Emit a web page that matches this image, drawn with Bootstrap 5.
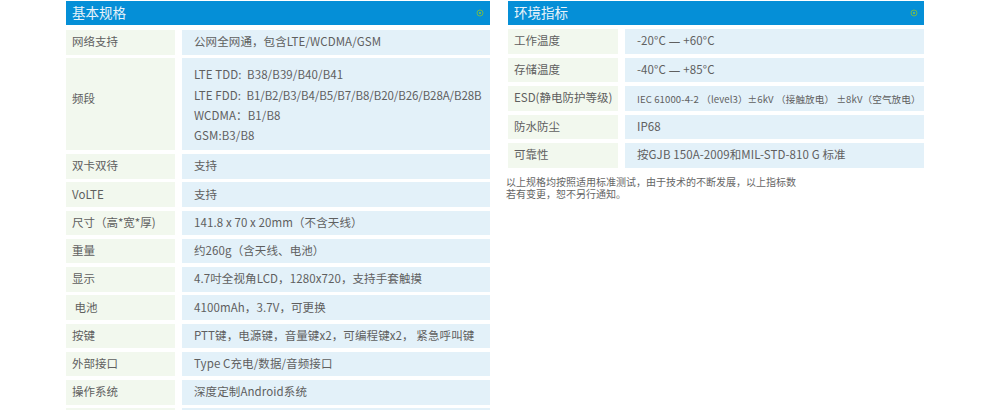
<!DOCTYPE html>
<html lang="zh"><head><meta charset="utf-8"><title>规格</title>
<link href="https://cdn.jsdelivr.net/npm/bootstrap@5.3.0/dist/css/bootstrap.min.css" rel="stylesheet">
<style>
html,body{height:410px;overflow:hidden;background:#fff}
body{font-family:"Noto Sans CJK SC","Noto Sans",sans-serif;font-size:11.5px;color:#5f5f5f;line-height:1.2}
.sheet{padding:1px 66px 0;gap:18px}
.pane-l{width:424px;flex:none}
.pane-r{width:416px;flex:none}
.head-bar{height:24px;background:#058fd7;color:#e8f3fa;font-size:13.5px;padding:0 6px 2px;margin-bottom:5px}
.dot-ic{width:8px;height:8px;margin-top:1px}
.spec-rows{gap:3.75px}
.pane-r .spec-rows{gap:4px}
.pane-r .head-bar{margin-bottom:4px}
.spec-row{min-height:24.5px;gap:7px;white-space:nowrap}
.lab{width:109px;flex:none;background:#f2f8ee;padding:0 0 0 6px}
.lab-up{padding-bottom:11px}
.val{flex:1;background:#e3f1f9;padding:0 0 0 12px;letter-spacing:.1px}
.pane-r .lab{width:110px}
.multi{padding-top:6px;line-height:20.3px;height:92px}
.squeeze{letter-spacing:-.09px}
.em-dash{font-family:"Noto Sans",sans-serif;margin:0 3px;letter-spacing:0}
.tiny{font-size:9.6px;padding-top:2px}
.foot-note{font-size:10px;line-height:12px;margin:8px 0 0 -2px;color:#666}
</style></head><body>
<div class="sheet d-flex">
<section class="pane-l">
<div class="head-bar d-flex align-items-center justify-content-between"><span>基本规格</span><svg class="dot-ic" viewBox="0 0 8 8"><circle cx="4" cy="4" r="3" fill="none" stroke="#6fb84e"/><circle cx="4" cy="4" r="1" fill="#8cc63f"/></svg></div>
<div class="spec-rows d-flex flex-column">
<div class="spec-row d-flex"><div class="lab d-flex align-items-center">网络支持</div><div class="val d-flex align-items-center">公网全网通，包含LTE/WCDMA/GSM</div></div>
<div class="spec-row d-flex"><div class="lab lab-up d-flex align-items-center">频段</div><div class="val multi">LTE TDD:&nbsp; B38/B39/B40/B41<br>LTE FDD:&nbsp; <span class="squeeze">B1/B2/B3/B4/B5/B7/B8/B20/B26/B28A/B28B</span><br>WCDMA：B1/B8<br>GSM:B3/B8</div></div>
<div class="spec-row d-flex"><div class="lab d-flex align-items-center">双卡双待</div><div class="val d-flex align-items-center">支持</div></div>
<div class="spec-row d-flex"><div class="lab d-flex align-items-center">VoLTE</div><div class="val d-flex align-items-center">支持</div></div>
<div class="spec-row d-flex"><div class="lab d-flex align-items-center">尺寸（高*宽*厚)</div><div class="val d-flex align-items-center">141.8 x 70 x 20mm（不含天线）</div></div>
<div class="spec-row d-flex"><div class="lab d-flex align-items-center">重量</div><div class="val d-flex align-items-center">约260g（含天线、电池）</div></div>
<div class="spec-row d-flex"><div class="lab d-flex align-items-center">显示</div><div class="val d-flex align-items-center">4.7吋全视角LCD，1280x720，支持手套触摸</div></div>
<div class="spec-row d-flex"><div class="lab d-flex align-items-center">&nbsp;电池</div><div class="val d-flex align-items-center">4100mAh，3.7V，可更换</div></div>
<div class="spec-row d-flex"><div class="lab d-flex align-items-center">按键</div><div class="val d-flex align-items-center">PTT键，电源键，音量键x2，可编程键x2， 紧急呼叫键</div></div>
<div class="spec-row d-flex"><div class="lab d-flex align-items-center">外部接口</div><div class="val d-flex align-items-center">Type C充电/数据/音频接口</div></div>
<div class="spec-row d-flex"><div class="lab d-flex align-items-center">操作系统</div><div class="val d-flex align-items-center">深度定制Android系统</div></div>
<div class="spec-row d-flex"><div class="lab"></div><div class="val"></div></div>
</div>
</section>
<section class="pane-r">
<div class="head-bar d-flex align-items-center justify-content-between"><span>环境指标</span><svg class="dot-ic" viewBox="0 0 8 8"><circle cx="4" cy="4" r="3" fill="none" stroke="#6fb84e"/><circle cx="4" cy="4" r="1" fill="#8cc63f"/></svg></div>
<div class="spec-rows d-flex flex-column">
<div class="spec-row d-flex"><div class="lab d-flex align-items-center">工作温度</div><div class="val d-flex align-items-center"><span>-20°C<span class="em-dash">—</span>+60°C</span></div></div>
<div class="spec-row d-flex"><div class="lab d-flex align-items-center">存储温度</div><div class="val d-flex align-items-center"><span>-40°C<span class="em-dash">—</span>+85°C</span></div></div>
<div class="spec-row d-flex"><div class="lab d-flex align-items-center">ESD(静电防护等级)</div><div class="val d-flex align-items-center tiny">IEC 61000-4-2 （level3）±6kV （接触放电） ±8kV（空气放电）</div></div>
<div class="spec-row d-flex"><div class="lab d-flex align-items-center">防水防尘</div><div class="val d-flex align-items-center">IP68</div></div>
<div class="spec-row d-flex"><div class="lab d-flex align-items-center">可靠性</div><div class="val d-flex align-items-center">按GJB 150A-2009和MIL-STD-810 G 标准</div></div>
</div>
<p class="foot-note">以上规格均按照适用标准测试，由于技术的不断发展，以上指标数<br>若有变更，恕不另行通知。</p>
</section>
</div>
</body></html>
